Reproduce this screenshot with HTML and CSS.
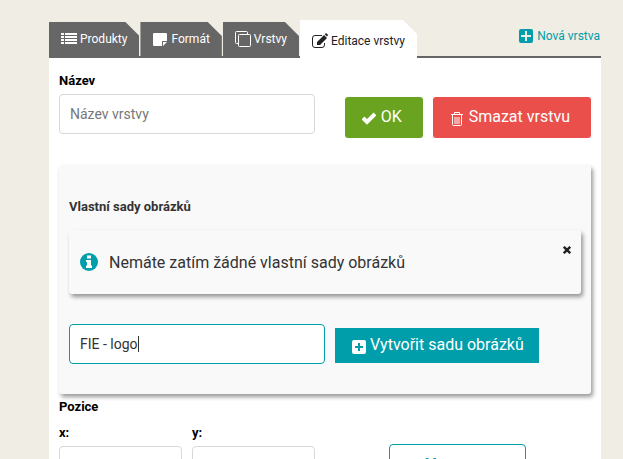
FILE: index.html
```html
<!DOCTYPE html>
<html lang="cs">
<head>
  <meta charset="UTF-8">
  <meta name="viewport" content="width=device-width, initial-scale=1.0">
  <title>Editace vrstvy</title>
  <link rel="stylesheet" href="styles.css">
</head>
<body>

  <div class="editor">
    <!-- Záložky -->
    <header class="header">
      <nav class="tabs">
        <a href="#produkty" class="tab">
          <svg class="icon" viewBox="0 0 16 16"><path fill="currentColor" d="M0 2h3v2H0zM4 2h12v2H4zM0 5h3v2H0zM4 5h12v2H4zM0 8h3v2H0zM4 8h12v2H4zM0 11h3v2H0zM4 11h12v2H4z"/></svg>
          <span>Produkty</span>
        </a>
        <a href="#format" class="tab">
          <svg class="icon" viewBox="0 0 16 16"><path fill="currentColor" d="M2 2h12q1 0 1 1v7h-5v5H2q-1 0-1-1V3q0-1 1-1zM11 11h4l-4 4z"/></svg>
          <span>Formát</span>
        </a>
        <a href="#vrstvy" class="tab">
          <svg class="icon" viewBox="0 0 16 16"><g fill="none" stroke="currentColor"><path d="M3 12.5H1.5q-1 0-1-1v-10q0-1 1-1h10q1 0 1 1V3"/><rect x="3.5" y="3.5" width="12" height="12" rx="1"/></g></svg>
          <span>Vrstvy</span>
        </a>
        <a href="#editace" class="tab tab-active">
          <svg class="icon" viewBox="0 0 16 16"><path fill="none" stroke="currentColor" d="M10 2.5H3Q.5 2.5.5 5v7q0 2.5 2.5 2.5h7q2.5 0 2.5-2.5v-2"/><path fill="currentColor" d="M5 12V9l7-7 3 3-7 7zM12.7 1.3l.8-.8q.6-.5 1.2 0l1 1q.5.6 0 1.2l-.8.8z"/></svg>
          <span>Editace vrstvy</span>
        </a>
      </nav>
      <a href="#nova" class="new-layer">
        <svg class="icon-small" viewBox="0 0 14 14"><path fill="currentColor" fill-rule="evenodd" d="M2 0h10q2 0 2 2v10q0 2-2 2H2q-2 0-2-2V2q0-2 2-2zM6 2v4H2v2h4v4h2V8h4V6H8V2z"/></svg>
        <span>Nová vrstva</span>
      </a>
    </header>

    <main class="content">
      <div class="row name-row">
        <div class="field">
          <label for="nazev">Název</label>
          <input type="text" id="nazev" placeholder="Název vrstvy">
        </div>
        <div class="actions">
          <button type="button" class="btn btn-ok">
            <svg class="icon-small" viewBox="0 0 14 14"><path fill="none" stroke="currentColor" stroke-width="4" d="M1 6l4 4 8-8"/></svg>
            <span>OK</span>
          </button>
          <button type="button" class="btn btn-delete">
            <svg class="icon-small" viewBox="0 0 14 14"><path fill="none" stroke="currentColor" d="M1 2.5h12M4.5 2V.5h5V2M2.5 3v9.5q0 1 1 1h7q1 0 1-1V3M5 5v7M7 5v7M9 5v7"/></svg>
            <span>Smazat vrstvu</span>
          </button>
        </div>
      </div>

      <!-- Vlastní sady -->
      <section class="panel">
        <h2>Vlastní sady obrázků</h2>
        <div class="message">
          <svg class="icon-info" viewBox="0 0 18 18"><circle cx="9" cy="9" r="9" fill="#009daa"/><path fill="#fff" d="M7 2.5h4v3H7zM6 7h5v5.5h1V15H6v-2.5h1V9H6z"/></svg>
          <p>Nemáte zatím žádné vlastní sady obrázků</p>
          <button type="button" class="close" aria-label="Zavřít"><svg viewBox="0 0 8 8"><path stroke="currentColor" stroke-width="2.4" d="M.8.8l6.4 6.4M7.2.8L.8 7.2"/></svg></button>
        </div>
        <div class="row create-row">
          <input type="text" id="sada" class="focused" value="FIE - logo" aria-label="Název sady">
          <button type="button" class="btn btn-create">
            <svg class="icon-small" viewBox="0 0 14 14"><path fill="currentColor" fill-rule="evenodd" d="M2 0h10q2 0 2 2v10q0 2-2 2H2q-2 0-2-2V2q0-2 2-2zM6 3v3H3v2h3v3h2V8h3V6H8V3z"/></svg>
            <span>Vytvořit sadu obrázků</span>
          </button>
        </div>
      </section>

      <h3>Pozice</h3>
      <div class="row position-row">
        <div class="field-small">
          <label for="x">x:</label>
          <input type="text" id="x">
        </div>
        <div class="field-small">
          <label for="y">y:</label>
          <input type="text" id="y">
        </div>
        <button type="button" class="btn-outline">Vyrovnat</button>
      </div>
    </main>
  </div>

</body>
</html>
```
FILE: styles.css
```css
* {
  box-sizing: border-box;
}
html {
  overflow: hidden;
}
body {
  margin: 0;
  background-color: #f0ede5;
  font-family: Roboto, sans-serif;
  font-size: 14px;
  color: #333;
}
a {
  text-decoration: none;
}
.editor {
  margin: 0 22px 0 49px;
  padding-top: 20px;
}
.header {
  display: flex;
  justify-content: space-between;
  align-items: flex-end;
  border-bottom: 2px solid #666;
}
.tabs {
  display: flex;
  align-items: flex-end;
  gap: 1px;
  margin-bottom: -2px;
}
.tab {
  display: flex;
  align-items: center;
  gap: 3px;
  height: 36px;
  padding: 0 12px 2px;
  background-color: #666;
  color: #fff;
  font-size: 12px;
  clip-path: polygon(0 0, calc(100% - 14px) 0, 100% 14px, 100% 100%, 0 100%);
}
.tab-active {
  height: 38px;
  padding-top: 6px;
  background-color: #fff;
  color: #222;
}
.icon {
  width: 16px;
  height: 16px;
}
.icon-small {
  flex: none;
  width: 14px;
  height: 14px;
}
.new-layer {
  display: flex;
  align-items: center;
  gap: 4px;
  height: 36px;
  padding: 0 1px 4px 0;
  color: #009daa;
  font-size: 12px;
}
.content {
  padding: 15px 10px 0;
  background-color: #fff;
}
.row {
  display: flex;
}
label,
h2,
h3 {
  display: block;
  margin: 0;
  color: #000;
  font-size: 13px;
  font-weight: bold;
  line-height: 16px;
}
input[type="text"] {
  display: block;
  width: 100%;
  height: 40px;
  padding: 0 10px;
  border: 1px solid #d8d8d8;
  border-radius: 4px;
  background-color: #fff;
  color: #333;
  font-family: inherit;
  font-size: 14px;
  outline: none;
}
input::placeholder {
  color: #777;
}
.name-row {
  justify-content: space-between;
  align-items: flex-end;
}
.field {
  flex: 0 0 256px;
}
.field label,
.field-small label {
  margin-bottom: 5px;
}
.actions {
  display: flex;
  gap: 10px;
  margin-bottom: -4px;
}
.btn {
  display: flex;
  align-items: center;
  gap: 5px;
  height: 41px;
  padding: 0 21px 2px 17px;
  border: none;
  border-radius: 3px;
  color: #fff;
  font-family: inherit;
  font-size: 16px;
  cursor: pointer;
}
.btn .icon-small {
  margin-top: 5px;
}
.btn-ok {
  background-color: #69a320;
}
.btn-delete {
  background-color: #ea4f4b;
}
.panel {
  margin-top: 31px;
  padding: 34px 10px 30px;
  border-radius: 3px;
  background-color: #f9f9f9;
  box-shadow: 2px 3px 4px rgba(0, 0, 0, 0.4);
}
.panel h2 {
  color: #333;
}
.message {
  display: flex;
  align-items: center;
  gap: 11px;
  height: 64px;
  margin-top: 15px;
  padding: 0 10px 0 11px;
  border-radius: 3px;
  background-color: #f9f9f9;
  box-shadow: 2px 3px 4px rgba(0, 0, 0, 0.4);
}
.message p {
  flex: 1;
  margin: 0;
  font-size: 16px;
}
.icon-info {
  width: 18px;
  height: 18px;
}
.close {
  align-self: flex-start;
  margin-top: 16px;
  padding: 0;
  border: none;
  background: none;
  color: #222;
  line-height: 0;
  cursor: pointer;
}
.close svg {
  width: 8px;
  height: 8px;
}
.create-row {
  align-items: flex-end;
  gap: 10px;
  margin-top: 30px;
}
.create-row input[type="text"] {
  flex: 0 0 256px;
  width: 256px;
}
/* rámeček a kurzor aktivního pole */
.create-row input.focused {
  border-color: #009daa;
  background: linear-gradient(#333, #333) 68px center / 1px 16px no-repeat #fff;
  caret-color: transparent;
}
.btn-create {
  gap: 4px;
  height: 35px;
  padding: 0 15px 2px 17px;
  margin-bottom: 1px;
  border-radius: 0;
  background-color: #009daa;
}
h3 {
  margin: 5px 0 10px;
}
.position-row {
  align-items: flex-start;
  gap: 10px;
}
.field-small {
  flex: 0 0 123px;
}
.btn-outline {
  width: 137px;
  height: 40px;
  margin: 19px 0 0 64px;
  border: 1px solid #009daa;
  border-radius: 4px;
  background-color: #fff;
  color: #009daa;
  font-family: inherit;
  font-size: 16px;
  font-weight: bold;
}
```
